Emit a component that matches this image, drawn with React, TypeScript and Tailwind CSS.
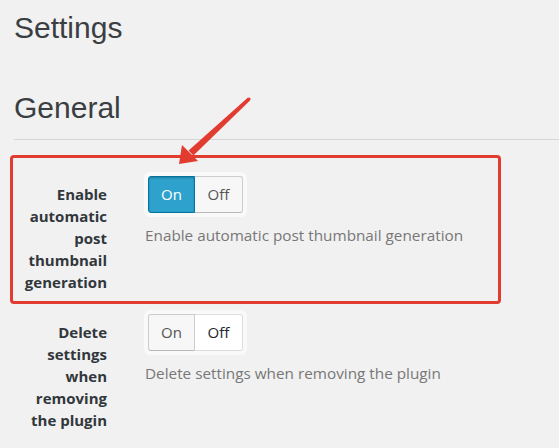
import React from 'react'

interface ToggleProps {
  value: boolean
}

const Toggle = ({ value }: ToggleProps) => {
  const active = 'bg-[#2ea2cc] border-[#0074a2] text-white shadow-[inset_0_1px_2px_rgba(0,0,0,0.25)]'
  const idle = 'bg-[#f7f7f7] border-[#cccccc] border-b-[#b8b8b8] text-[#555555]'
  return (
    <div className="inline-flex rounded-[6px] bg-[#f9f9f9] p-[4px]">
      <span
        className={`flex h-[37px] w-[47px] items-center justify-center rounded-l-[3px] border text-[15px] ${value ? active : idle}`}
      >
        On
      </span>
      <span
        className={`flex h-[37px] w-[48px] items-center justify-center rounded-r-[3px] border border-l-0 text-[15px] ${value ? idle : 'bg-white border-[#dddddd] text-[#23282d]'}`}
      >
        Off
      </span>
    </div>
  )
}

interface RowProps {
  label: string[]
  value: boolean
  description: string
}

const SettingRow = ({ label, value, description }: RowProps) => (
  <div className="flex items-start">
    <div className="w-[93px] pt-[11px] text-right text-[15px] font-bold leading-[22px] text-[#32373c]">
      {label.map((line) => (
        <div key={line} className="whitespace-nowrap">{line}</div>
      ))}
    </div>
    <div className="ml-[37px]">
      <Toggle value={value} />
      <p className="mt-[7px] pl-[1px] text-[15.3px] leading-[22px] whitespace-nowrap text-[#777777]">{description}</p>
    </div>
  </div>
)

export default function App() {
  return (
    <div
      className="relative h-[448px] w-[559px] overflow-hidden bg-[#f1f1f1]"
      style={{ fontFamily: '"Open Sans", "Noto Sans", sans-serif' }}
    >
      <div className="pl-[14px]">
        <h1
          className="pt-[10px] text-[30px] font-normal leading-[36px] text-[#3a3e42]"
          style={{ fontFamily: '"Liberation Sans", Arial, sans-serif' }}
        >
          Settings
        </h1>
        <h2
          className="mt-[44px] border-b border-[#d6d6d6] pb-[13px] text-[30px] font-normal leading-[36px] text-[#3a3e42]"
          style={{ fontFamily: '"Liberation Sans", Arial, sans-serif' }}
        >
          General
        </h2>

        <div className="mt-[32px] flex flex-col gap-[17px]">
          <SettingRow
            label={['Enable', 'automatic', 'post', 'thumbnail', 'generation']}
            value={true}
            description="Enable automatic post thumbnail generation"
          />
          <SettingRow
            label={['Delete', 'settings', 'when', 'removing', 'the plugin']}
            value={false}
            description="Delete settings when removing the plugin"
          />
        </div>
      </div>

      {/* annotation box */}
      <div className="pointer-events-none absolute left-[10px] top-[155px] h-[149px] w-[491px] rounded-[4px] border-[3px] border-[#e23b2f]" />

      {/* annotation arrow */}
      <svg className="pointer-events-none absolute left-0 top-0" width="559" height="448" viewBox="0 0 559 448">
        <polygon points="250,100.5 248,97.5 188.6,150.4 193.4,155.6" fill="#e23b2f" />
        <circle cx="249" cy="99" r="1.6" fill="#e23b2f" />
        <polygon points="179,164 182,145 198,161" fill="#e23b2f" />
      </svg>
    </div>
  )
}
